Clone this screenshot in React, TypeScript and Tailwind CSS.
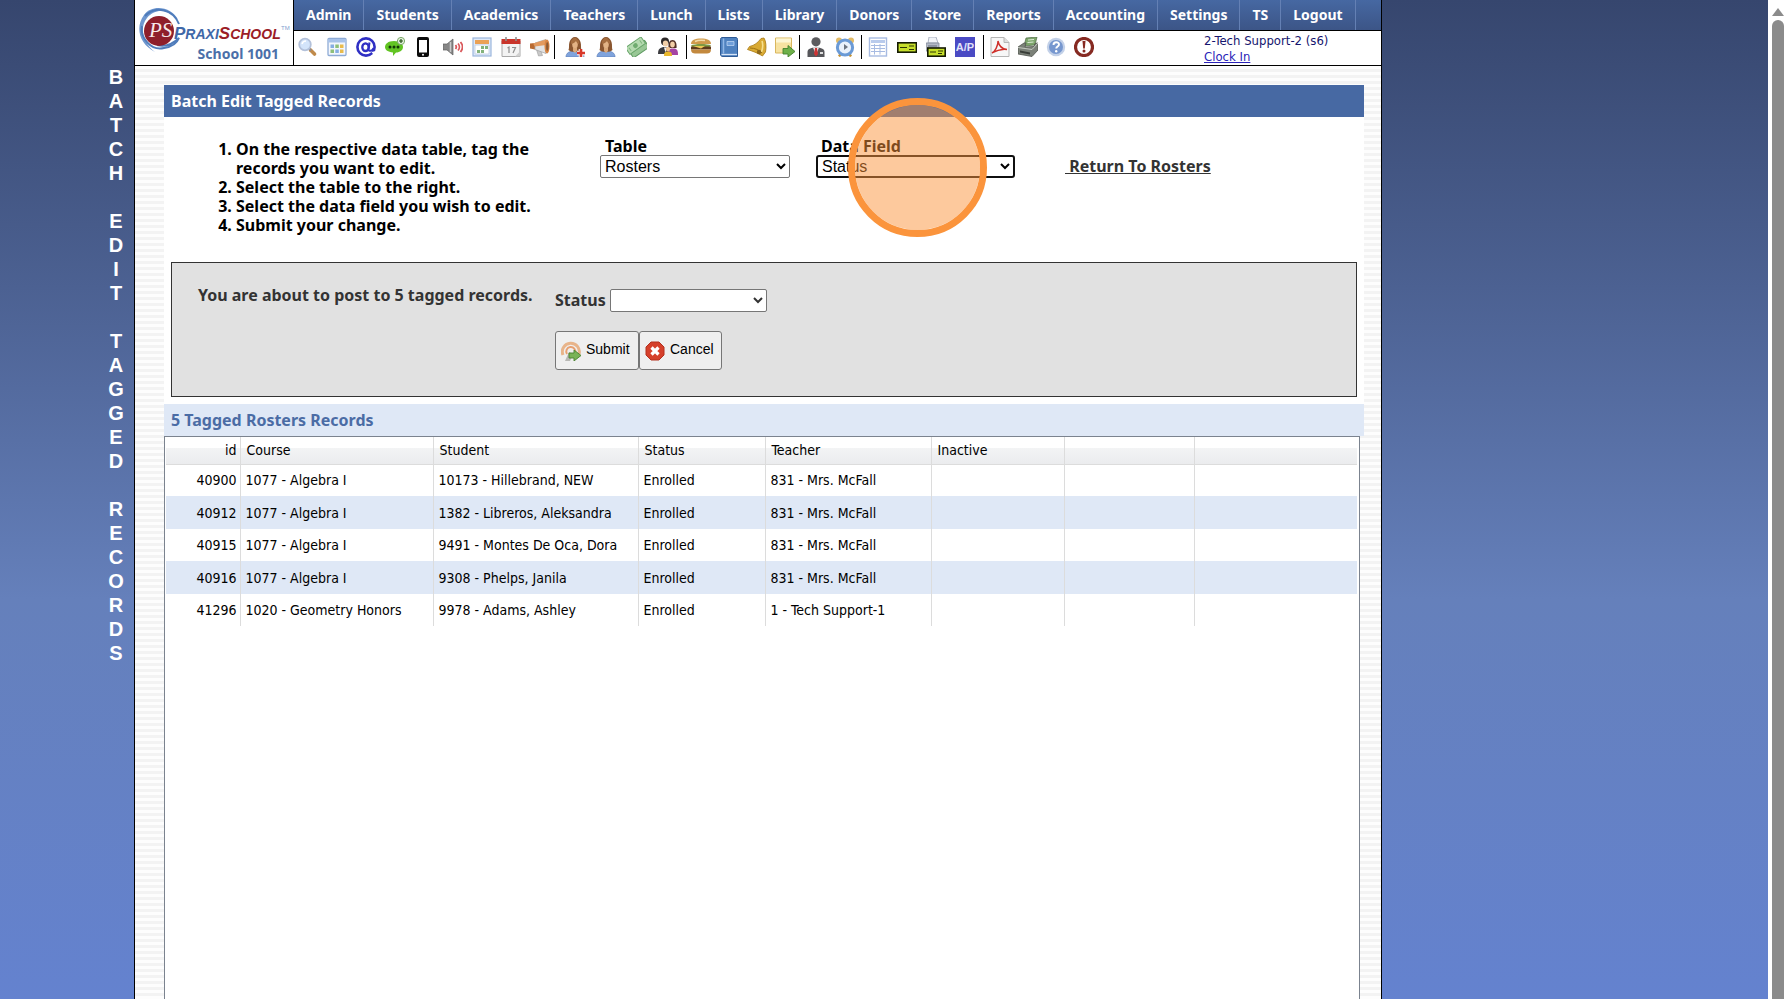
import type { ReactNode } from "react";

const menu = [
  "Admin",
  "Students",
  "Academics",
  "Teachers",
  "Lunch",
  "Lists",
  "Library",
  "Donors",
  "Store",
  "Reports",
  "Accounting",
  "Settings",
  "TS",
  "Logout",
];

const columns = [
  { label: "id", width: "w-[74px]" },
  { label: "Course", width: "w-[193px]" },
  { label: "Student", width: "w-[205px]" },
  { label: "Status", width: "w-[127px]" },
  { label: "Teacher", width: "w-[166px]" },
  { label: "Inactive", width: "w-[133px]" },
  { label: "", width: "w-[130px]" },
  { label: "", width: "" },
];

const records = [
  ["40900", "1077 - Algebra I", "10173 - Hillebrand, NEW", "Enrolled", "831 - Mrs. McFall"],
  ["40912", "1077 - Algebra I", "1382 - Libreros, Aleksandra", "Enrolled", "831 - Mrs. McFall"],
  ["40915", "1077 - Algebra I", "9491 - Montes De Oca, Dora", "Enrolled", "831 - Mrs. McFall"],
  ["40916", "1077 - Algebra I", "9308 - Phelps, Janila", "Enrolled", "831 - Mrs. McFall"],
  ["41296", "1020 - Geometry Honors", "9978 - Adams, Ashley", "Enrolled", "1 - Tech Support-1"],
];

type Tool = { name: string; art: ReactNode };
type ToolGroup = { spacing: string; tools: Tool[] };

const woman = (
  <>
    <path d="M1 20c0-4 3-6 9-6s9 2 9 6z" fill="#7fa3dc" stroke="#5d80ba" strokeWidth=".7" />
    <path d="M3.500 13c1-2 0-5 1-8 1-3 3-5 5.500-5s4.500 2 5.500 5 0 6 1 8c-2 2.500-11 2.500-13 0z" fill="#8a5630" />
    <ellipse cx="10" cy="7.500" rx="2.800" ry="4" fill="#e3b385" />
    <path d="M8 11h4v3l-2 2-2-2z" fill="#dba878" />
    <path d="M6 7c2-.4 4-1.500 5-3 .7 1.500 1.500 2.500 3 3V4L11 1H8.500L6 4z" fill="#a56d3f" />
  </>
);

const toolGroups: ToolGroup[] = [
  {
    spacing: "gap-[9px] px-1",
    tools: [
      {
        name: "Search",
        art: (
          <>
            <path d="M12.500 13l4 4" stroke="#c08a4a" strokeWidth="3.600" strokeLinecap="round" />
            <path d="M11 11.500l2 2" stroke="#8d8d95" strokeWidth="2" />
            <circle cx="7" cy="7.500" r="5.800" fill="#d3e4fa" stroke="#b3c1da" strokeWidth="1.800" />
            <path d="M4 7c.5-2 2-3 4-3" stroke="#fff" strokeWidth="1.500" fill="none" />
          </>
        ),
      },
      {
        name: "Calendar view",
        art: (
          <>
            <rect x="1" y="1.500" width="18" height="17" rx="1" fill="#f3f7fd" stroke="#8eabd6" strokeWidth="1.300" />
            <path d="M1.500 2h17v3.500h-17z" fill="#a7c2ea" />
            <path d="M3.500 7.500h3.500V11H3.500zM8.300 12.500h3.500V16H8.300z" fill="#86aee2" />
            <path d="M8.300 7.500h3.500V11H8.300zM3.500 12.500h3.500V16H3.500z" fill="#8dbf7a" />
            <path d="M13 7.500h3.500V11H13zM13 12.500h3.500V16H13z" fill="#e9bb4c" />
          </>
        ),
      },
      {
        name: "Email",
        art: (
          <>
            <circle cx="10" cy="10" r="8.600" fill="#fff" stroke="#2f2fc4" strokeWidth="2.600" />
            <ellipse cx="9.500" cy="10.200" rx="3.200" ry="3.800" fill="none" stroke="#2f2fc4" strokeWidth="2.300" />
            <path d="M13.500 5.500l-1 7c0 2 4 2 5-1.500" fill="none" stroke="#2f2fc4" strokeWidth="2" />
            <path d="M15.500 15l4.500-1v4l-3-1z" fill="#fff" />
          </>
        ),
      },
      {
        name: "Text message",
        art: (
          <>
            <path d="M9 4c6 0 9 3 9 6s-3 5.500-7 5.500L8 19v-3.500C3 15 0 13 0 10s3-6 9-6z" fill="#62c423" />
            <circle cx="5" cy="10" r="1.500" fill="#123a06" />
            <circle cx="9" cy="10" r="1.500" fill="#123a06" />
            <circle cx="13" cy="10" r="1.500" fill="#123a06" />
            <circle cx="16" cy="4" r="3.600" fill="#e6f3df" stroke="#79a866" />
            <path d="M16 2v4M14 4h4" stroke="#244f16" strokeWidth="1.200" />
          </>
        ),
      },
      {
        name: "Phone",
        art: (
          <>
            <rect x="3" y="0" width="12" height="20" rx="2" fill="#0c0c0c" />
            <rect x="5" y="3" width="8" height="12.500" fill="#fff" />
            <circle cx="9" cy="17.800" r="1" fill="#fff" />
          </>
        ),
      },
      {
        name: "Announcements",
        art: (
          <>
            <path d="M0 7h4l6-5v16l-6-5H0z" fill="#868686" stroke="#5e5e5e" strokeWidth=".7" />
            <path d="M7.500 5v10" stroke="#c9c9c9" strokeWidth="1.500" />
            <path d="M12.500 8c1 1.200 1 2.800 0 4M15 6.500c1.800 2 1.800 5 0 7M17.500 5c2.500 3 2.500 7 0 10" fill="none" stroke="#d9585b" strokeWidth="1.800" />
          </>
        ),
      },
      {
        name: "Schedule",
        art: (
          <>
            <rect x="1" y="1" width="18" height="18" fill="#dfeafa" stroke="#9cb6dd" strokeWidth="1.200" />
            <path d="M3 3h14v4H3z" fill="#eaa156" />
            <path d="M3 8h14v9H3z" fill="#fff" stroke="#bccbe2" strokeWidth=".8" />
            <path d="M9 9h3v3H9zM13 9h3v3h-3zM5 13h3v3H5zM9 13h3v3H9z" fill="#82b27b" />
          </>
        ),
      },
      {
        name: "Calendar",
        art: (
          <>
            <path d="M1 4h18v15.500H1z" fill="#f3f3f3" stroke="#a8a8a8" />
            <path d="M.5 2h19v5H.5z" fill="#c9352b" />
            <path d="M5 0v4M15 0v4" stroke="#8f8f8f" strokeWidth="1.600" />
            <path d="M6.500 11l1.500-1v6M11 10.500h3.500L12 16" fill="none" stroke="#8e8e8e" strokeWidth="1.200" />
            <path d="M14 19.500l5-5v5z" fill="#cfcfcf" />
          </>
        ),
      },
      {
        name: "Broadcast",
        art: (
          <>
            <path d="M6 11l2.500 8 4-.5-2.500-7z" fill="#c9c9c9" stroke="#9b9b9b" strokeWidth=".6" />
            <path d="M0 6.500l5-.5v6.500l-5-1z" fill="#b96a30" />
            <path d="M5 6l11-3.500v14L5 12.500z" fill="#e3e3e3" stroke="#a5a5a5" strokeWidth=".8" />
            <path d="M3 6.500l13-4V8L5 9.500z" fill="#e39a5e" />
            <ellipse cx="17" cy="9.500" rx="2.500" ry="7" fill="#d98543" />
            <ellipse cx="17.300" cy="9.500" rx="1.200" ry="4.300" fill="#8b5a34" />
          </>
        ),
      },
    ],
  },
  {
    spacing: "gap-[11px] pr-2 pl-2.5",
    tools: [
      {
        name: "Add student",
        art: (
          <>
            {woman}
            <path d="M16 12v8M12 16h8" stroke="#fff" strokeWidth="4.500" />
            <path d="M16 12v8M12 16h8" stroke="#d8392b" strokeWidth="2.600" />
          </>
        ),
      },
      { name: "Students", art: woman },
      {
        name: "Payments",
        art: (
          <g transform="rotate(-35 10 10)">
            <rect x="1" y="9" width="19" height="8" fill="#98c795" stroke="#5d9960" />
            <rect x="0" y="4" width="19" height="8" fill="#b5dab0" stroke="#66a468" />
            <circle cx="9.500" cy="8" r="2.400" fill="#6fab6f" />
            <path d="M3 6v4M16 6v4" stroke="#7db67c" />
          </g>
        ),
      },
      {
        name: "Families",
        art: (
          <>
            <circle cx="7" cy="4.500" r="4" fill="#2e2a2a" />
            <ellipse cx="7.500" cy="6.500" rx="2.700" ry="3" fill="#f2cfa8" />
            <path d="M0 17c0-5 2-7 7-7s6 2 6 7z" fill="#3b3b3f" />
            <path d="M6 10.500h3l-1.500 5z" fill="#f5f5f5" />
            <path d="M10.500 11c-.5-5 1-8 4-8s4.500 3 4 8z" fill="#523025" />
            <ellipse cx="14.500" cy="7.500" rx="2.300" ry="3" fill="#f2cfa8" />
            <path d="M10 18c0-5 1-6.500 5-6.500s5 1.500 5 6.500z" fill="#a544a3" />
            <circle cx="10" cy="12" r="2.200" fill="#f0c493" />
            <path d="M6 19c0-3.500 1-4.500 4-4.500s4 1 4 4.500z" fill="#e9b72c" />
          </>
        ),
      },
    ],
  },
  {
    spacing: "gap-2 px-1",
    tools: [
      {
        name: "Lunch",
        art: (
          <>
            <path d="M0 7c0-4 4-5.500 10-5.500S20 3 20 7z" fill="#cf9a4c" />
            <path d="M4 4.500c3-1.500 7-1.500 10-1" stroke="#f3dba8" strokeWidth="1.500" fill="none" />
            <path d="M0 8.500c3-2 17-2 20 0l-2 2H2z" fill="#7f9a43" />
            <path d="M0 9.500h20v3H0z" fill="#5f3a1c" />
            <path d="M2 9h12l-4 2.500z" fill="#ecca55" />
            <path d="M0 12.500h20c0 3-2 4-4 4H4c-2 0-4-1-4-4z" fill="#c3893e" />
          </>
        ),
      },
      {
        name: "Gradebook",
        art: (
          <>
            <path d="M3 .5h14c1 0 1.500 1 1.500 2v17H4c-2 0-2.500-1-2.500-2.500V2.500c0-1 .5-2 1.500-2z" fill="#4f82c0" stroke="#2e5a95" />
            <path d="M4.500 1.500v15" stroke="#91b7e6" strokeWidth="1.500" />
            <path d="M2.500 17.500h15.500" stroke="#d7e4f5" strokeWidth="1.300" />
            <path d="M8 4.500h7v4H8z" fill="#6f9fda" stroke="#c6dbf5" strokeWidth=".7" />
          </>
        ),
      },
      {
        name: "Bell",
        art: (
          <>
            <path d="M17 1c2 3 2.500 9 1.500 14l-3 4C11 16 5 14 .5 12.500l2-3c5-1 8.500-4 11.500-8z" fill="#d9aa33" stroke="#a87a14" strokeWidth=".8" />
            <path d="M15 4c1 3 1 7-.5 11" stroke="#f7e08d" strokeWidth="1.600" fill="none" />
            <path d="M3 11c5 0 9 2 12 5" stroke="#9d7212" fill="none" />
            <circle cx="12" cy="15" r="2.200" fill="#8f6a1c" />
          </>
        ),
      },
      {
        name: "Post note",
        art: (
          <>
            <path d="M.5 1h16v15H.5z" fill="#f7e2a0" stroke="#d9b75f" />
            <path d="M1 1.500h15v4H1z" fill="#fdf6d4" />
            <path d="M8 11.500h5v-3l7 6-7 5.500v-3H8z" fill="#6eb049" stroke="#43812a" strokeWidth=".9" />
          </>
        ),
      },
    ],
  },
  {
    spacing: "gap-[9px] px-1.5",
    tools: [
      {
        name: "Staff",
        art: (
          <>
            <circle cx="10" cy="4.800" r="4.600" fill="#5c5c5f" />
            <path d="M1.500 20v-5c0-3 3-4.500 8.500-4.500s8.500 1.500 8.500 4.500v5z" fill="#56565a" />
            <path d="M7 10.500h6L10 18z" fill="#f3f3f3" />
            <path d="M9 11h2l1 6-2 2.500L8 17z" fill="#cd3434" />
            <path d="M14 15h3v2h-3z" fill="#dedede" />
          </>
        ),
      },
      {
        name: "Time clock",
        art: (
          <>
            <circle cx="4" cy="3.500" r="3" fill="#e3bb66" />
            <circle cx="16" cy="3.500" r="3" fill="#e3bb66" />
            <path d="M4 19.500l2-3M16 19.500l-2-3" stroke="#c59232" strokeWidth="2.400" />
            <circle cx="10" cy="10.500" r="7.600" fill="#e9f1fb" stroke="#6a9ad6" strokeWidth="3" />
            <path d="M9 7v6l4-3z" fill="#6b7480" />
          </>
        ),
      },
    ],
  },
  {
    spacing: "gap-[9px] pr-2 pl-1.5",
    tools: [
      {
        name: "Ledger",
        art: (
          <>
            <rect x="1.500" y="1" width="17" height="18" fill="#fff" stroke="#a7bbe2" strokeWidth="1.400" />
            <path d="M3 3h14v3H3z" fill="#b9cbec" />
            <path d="M3 8.500h14M3 11.500h14M3 14.500h14M6.500 7v10.500M12 7v10.500" stroke="#a7bbe2" />
          </>
        ),
      },
      {
        name: "Checks",
        art: (
          <>
            <rect x=".8" y="5.800" width="18.600" height="9.400" fill="#c6df2b" stroke="#141a02" strokeWidth="1.600" />
            <path d="M3 10.500h7M12 9h5M12 12.500h5" stroke="#2c3503" strokeWidth="1.200" />
          </>
        ),
      },
      {
        name: "Print checks",
        art: (
          <>
            <path d="M3 0h7l2 6H2z" fill="#f2f4f8" stroke="#9aa3b5" strokeWidth=".8" />
            <path d="M0 6h13v8H0z" fill="#b3b9c6" stroke="#808898" strokeWidth=".8" />
            <path d="M2 9h9" stroke="#646c7b" />
            <rect x="1.800" y="11" width="17.400" height="8.200" fill="#c6df2b" stroke="#141a02" strokeWidth="1.600" />
            <path d="M4 15h6M12 14h5M12 16.500h4" stroke="#2c3503" />
          </>
        ),
      },
      {
        name: "Accounts payable",
        art: (
          <>
            <rect width="20" height="20" fill="#4a4ac4" />
            <text x="10" y="14" textAnchor="middle" fontSize="11" fontWeight="bold" fill="#e2e2f8" fontFamily="Liberation Sans, sans-serif">
              A/P
            </text>
          </>
        ),
      },
    ],
  },
  {
    spacing: "gap-2 pl-1.5",
    tools: [
      {
        name: "PDF",
        art: (
          <>
            <path d="M1 .5h13l5 5v14H1z" fill="#f7f7f7" stroke="#b5b5b5" />
            <path d="M14 .5v5h5" fill="#dedede" stroke="#b5b5b5" />
            <path d="M2 16c3-1.500 6-7 6-12 1 5 4 8 9 8.500-4-.5-10 .5-15 3.500z" fill="none" stroke="#cf2f2a" strokeWidth="1.400" />
          </>
        ),
      },
      {
        name: "Printer",
        art: (
          <>
            <path d="M8 1l11-1-2 8-11 1z" fill="#7da66c" stroke="#4d6a45" strokeWidth=".7" />
            <path d="M10 3l6-.5M9.500 5.500l6-.5" stroke="#dfeeda" />
            <path d="M0 10l6-4h2l-1 4 9-.5 1-3 3-.5v7l-6 6.500L0 17z" fill="#7b8178" stroke="#4f534d" strokeWidth=".8" />
            <path d="M0 10.500l14 2L20 6" fill="none" stroke="#c4c9c1" />
            <path d="M2 13.500l10 2v2L2 15.500z" fill="#393d38" />
          </>
        ),
      },
      {
        name: "Help",
        art: (
          <>
            <circle cx="10" cy="10" r="9.200" fill="#c3d1e8" />
            <circle cx="10" cy="10" r="7" fill="#7697cf" />
            <path d="M7.500 8c0-3.500 5.500-3.500 5.500-.5 0 2-2.800 2-2.800 4" fill="none" stroke="#fff" strokeWidth="1.900" />
            <circle cx="10.200" cy="14.200" r="1.200" fill="#fff" />
          </>
        ),
      },
      {
        name: "Alerts",
        art: (
          <>
            <circle cx="10" cy="10" r="8.500" fill="#fff" stroke="#862a22" strokeWidth="3.200" />
            <path d="M8.500 4h3l-.7 7.500H9.200z" fill="#862a22" />
            <circle cx="10" cy="14" r="1.500" fill="#862a22" />
          </>
        ),
      },
    ],
  },
];

const Logo = () => (
  <svg viewBox="0 0 158 48" className="block h-12 w-[158px]" aria-hidden="true">
    <path d="M43 16C38 4 18-1 9 11s-5 29 11 37C8 39 4 24 12 14s22-9 31 2z" fill="#6f97cf" />
    <path d="M44 20C38 5 20 1 10 12M7 22c-2 12 9 25 22 22 8-1 13-5 15-10-6 6-14 9-22 7" fill="none" stroke="#4f7cbb" strokeWidth="2" />
    <circle cx="24" cy="27" r="15" fill="#8e1f2b" />
    <text x="14" y="33" fontSize="21" fontStyle="italic" fontFamily="Liberation Serif, serif" fill="#f6e9ea">
      PS
    </text>
    <text y="35" fontWeight="bold" fontStyle="italic" fontFamily="Liberation Sans, sans-serif" fill="#3f68a8">
      <tspan x="39" fontSize="17">
        P
      </tspan>
      <tspan fontSize="14">RAXI</tspan>
      <tspan fontSize="17" fill="#9b1c26">
        S
      </tspan>
      <tspan fontSize="14" fill="#9b1c26">
        CHOOL
      </tspan>
    </text>
    <text x="146" y="26" fontSize="6" fontFamily="Liberation Sans, sans-serif" fill="#7fa0cf">
      TM
    </text>
  </svg>
);

const SubmitIcon = () => (
  <svg viewBox="0 0 20 20" className="size-5" aria-hidden="true">
    <path d="M2 14a8.500 8.500 0 1 1 16-1" fill="none" stroke="#e8b48a" strokeWidth="3" />
    <path d="M6 13a4.500 4.500 0 1 1 8-1" fill="none" stroke="#e8a070" strokeWidth="2" />
    <path d="M8 11l-4 9h5l3-7z" fill="#b8b8b4" />
    <path d="M8 12h5V9l7 5.500-7 5.500v-3H8z" fill="#79b356" stroke="#4a8230" strokeWidth=".9" />
  </svg>
);

const CancelIcon = () => (
  <svg viewBox="0 0 20 20" className="size-5" aria-hidden="true">
    <path d="M6 1h8l5 5v8l-5 5H6l-5-5V6z" fill="#d5402b" stroke="#b3301f" />
    <path d="M6.500 6.500l7 7M13.500 6.500l-7 7" stroke="#fff" strokeWidth="3.200" />
  </svg>
);

const Header = () => (
  <header className="flex border-b border-black bg-white">
    <div className="flex w-[159px] shrink-0 flex-col border-r border-black pt-1">
      <Logo />
      <span className="-mt-1.5 pr-3.5 text-right font-[Noto_Sans,sans-serif] text-sm leading-4 font-bold text-[#4b6fa9]">School 1001</span>
    </div>
    <div className="min-w-0 flex-1">
      <nav className="flex h-[31px] border-b border-black bg-linear-to-b from-[#4668a2] to-[#3c5587] font-[Noto_Sans,sans-serif]">
        {menu.map((item) => (
          <a key={item} href="#" className="border-r border-[#6480b4] px-3 text-sm leading-[30px] font-bold text-white">
            {item}
          </a>
        ))}
      </nav>
      <div className="flex h-[34px] items-start justify-between">
        <div className="flex pt-1">
          {toolGroups.map((group, i) => (
            <div key={i} className={`flex h-6 items-center border-r border-black last:border-r-0 ${group.spacing}`}>
              {group.tools.map((tool) => (
                <button key={tool.name} type="button" aria-label={tool.name} className="size-5">
                  <svg viewBox="0 0 20 20" className="size-5">
                    {tool.art}
                  </svg>
                </button>
              ))}
            </div>
          ))}
        </div>
        <div className="w-[177px] pt-0.5 text-[13px] leading-4 text-[#15156e]">
          <div>2-Tech Support-2 (s6)</div>
          <a href="#" className="text-[#2a22b8] underline">
            Clock In
          </a>
        </div>
      </div>
    </div>
  </header>
);

const EditForm = () => (
  <div className="bg-white px-[7px] pb-[7px] font-[Noto_Sans,sans-serif]">
    <div className="flex h-[145px] items-start pt-5">
      <ol className="w-[429px] list-decimal pt-[3px] pr-12 pl-[65px] leading-[19px] font-bold">
        <li>On the respective data table, tag the records you want to edit.</li>
        <li>Select the table to the right.</li>
        <li>Select the data field you wish to edit.</li>
        <li>Submit your change.</li>
      </ol>
      <div className="flex w-[216px] flex-col items-start">
        <label htmlFor="table" className="pl-[5px] leading-[18px] font-bold">
          Table
        </label>
        <select id="table" className="h-[23px] w-[190px] rounded-[2px] border border-[#767676] bg-white font-[Liberation_Sans,sans-serif]">
          <option>Rosters</option>
        </select>
      </div>
      <div className="relative flex w-[249px] flex-col items-start">
        <label htmlFor="field" className="pl-[5px] leading-[18px] font-bold">
          Data Field
        </label>
        <select id="field" className="h-[23px] w-[199px] rounded-[3px] border-2 border-[#101010] bg-white font-[Liberation_Sans,sans-serif]">
          <option>Status</option>
        </select>
        {/* click marker */}
        <div className="pointer-events-none absolute -top-[39px] left-8 size-[139px] rounded-full border-[7px] border-[#fb943c] bg-[#fb943c]/50 bg-clip-padding" />
      </div>
      <a href="#" className="pt-5 leading-[19px] font-bold whitespace-pre text-[#333] underline">
        {" Return To Rosters"}
      </a>
    </div>
    <div className="flex h-[135px] border border-[#333] bg-[#e1e1e1] text-[#333]">
      <p className="w-[383px] pt-[23px] pl-[26px] leading-[19px] font-bold">You are about to post to 5 tagged records.</p>
      <div className="pt-[25px]">
        <div className="flex items-center gap-1">
          <label htmlFor="status" className="font-bold">
            Status
          </label>
          <select id="status" className="h-[23px] w-[157px] rounded-[2px] border border-[#767676] bg-white" />
        </div>
        <div className="mt-[19px] flex font-[Liberation_Sans,sans-serif] text-sm leading-4 text-black">
          <button type="button" className="flex h-[39px] w-[84px] items-center gap-[5px] rounded-[3px] border border-[#767676] bg-[#efefef] px-[5px]">
            <SubmitIcon />
            <span className="pb-1">Submit</span>
          </button>
          <button type="button" className="flex h-[39px] w-[83px] items-center gap-[5px] rounded-[3px] border border-[#767676] bg-[#efefef] px-[5px]">
            <CancelIcon />
            <span className="pb-1">Cancel</span>
          </button>
        </div>
      </div>
    </div>
  </div>
);

const RecordsTable = () => (
  <table className="w-full table-fixed border-collapse text-left text-sm">
    <thead>
      <tr className="h-[27px] bg-linear-to-b from-white from-40% via-[#f3f4f5] via-40% to-[#ebecee]">
        {columns.map((column, i) => (
          <th key={i} className={`${column.width} border-r border-b border-[#dcdcdc] pr-[3px] pl-1.5 font-normal first:text-right last:border-r-0`}>
            {column.label}
          </th>
        ))}
      </tr>
    </thead>
    <tbody>
      {records.map((record) => (
        <tr key={record[0]} className="odd:h-8 even:h-[33px] even:bg-[#dfe8f6]">
          {columns.map((_, i) => (
            <td key={i} className="border-r border-[#dcdcdc] pr-[3px] pl-[5px] whitespace-nowrap first:text-right last:border-r-0">
              {record[i]}
            </td>
          ))}
        </tr>
      ))}
    </tbody>
  </table>
);

export default function App() {
  return (
    <div className="flex h-screen overflow-hidden bg-linear-to-b from-[#36466e] via-[#6580bb] via-60% to-[#6482cf] font-[DejaVu_Sans_Condensed,Noto_Sans,sans-serif] text-base text-black">
      <aside className="w-[134px] shrink-0 pt-[65px] pr-[9px]">
        <h1 className="ml-auto flex w-[18px] flex-col text-center font-[Liberation_Sans,sans-serif] text-xl leading-6 font-bold text-white">
          {[..."BATCH EDIT TAGGED RECORDS"].map((letter, i) => (
            <span key={i} className="h-6">
              {letter}
            </span>
          ))}
        </h1>
      </aside>
      <div className="flex min-w-0 flex-1 flex-col border-x border-black bg-[repeating-linear-gradient(#fdfdfd_0_3px,#f3f3f3_3px_6px)]">
        <Header />
        <main className="mt-[19px] mr-[17px] ml-[29px] flex flex-1 flex-col">
          <h2 className="bg-[#4769a3] px-[7px] font-[Noto_Sans,sans-serif] leading-8 font-bold text-white">Batch Edit Tagged Records</h2>
          <EditForm />
          <h3 className="bg-[#dfe8f6] px-[7px] font-[Noto_Sans,sans-serif] leading-8 font-bold text-[#4b6ca5]">5 Tagged Rosters Records</h3>
          <section className="mr-1 flex-1 border border-b-0 border-[#7b838f] bg-white pr-0.5 pl-px">
            <RecordsTable />
          </section>
        </main>
      </div>
      <div className="w-[386px] shrink-0" />
      <div className="flex w-5 shrink-0 flex-col items-center bg-white">
        <svg viewBox="0 0 12 8" className="mt-2 mb-1 h-2 w-3" aria-hidden="true">
          <path d="M6 0l6 8H0z" fill="#8b8b8b" />
        </svg>
        <div className="w-3 flex-1 rounded-t-md bg-[#8b8b8b]" />
      </div>
    </div>
  );
}
